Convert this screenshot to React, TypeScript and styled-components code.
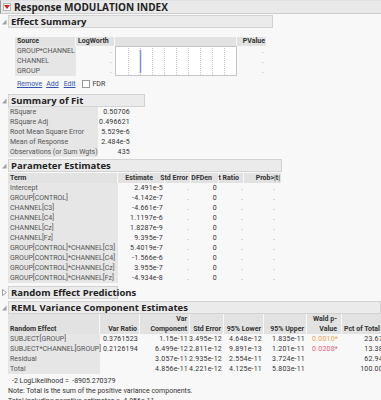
import React from "react";
import styled, { createGlobalStyle } from "styled-components";

const Global = createGlobalStyle`
  html, body { margin: 0; padding: 0; background: #f8f8f8; }
  body { font-family: Roboto, "Noto Sans", sans-serif; color: #333; }
  * { box-sizing: border-box; }
`;

const Page = styled.div`
  width: 381px;
  height: 400px;
  overflow: hidden;
  background: #f8f8f8;
  display: flex;
  flex-direction: column;
  font-size: 7px;
`;

const TopBar = styled.div`
  height: 14px;
  display: flex;
  align-items: center;
  gap: 3px;
  padding-left: 2px;
  background: #e9e9e9;
  border-top: 1px solid #e0e0e0;
  border-bottom: 1px solid #cdcdcd;
  border-left: 1px solid #9a9a9a;
`;

const RedButton = styled.span`
  width: 8px;
  height: 8px;
  display: flex;
  align-items: center;
  justify-content: center;
  background: #f4f4f4;
  border: 1px solid #b8b8b8;
`;

const MainTitle = styled.span`
  font-family: "Open Sans", sans-serif;
  font-size: 10px;
  font-weight: 700;
  color: #222;
  white-space: nowrap;
`;

const Outline = styled.section<{ $mt: number }>`
  margin-top: ${(p) => p.$mt}px;
  display: flex;
  flex-direction: column;
`;

const OutlineHead = styled.div`
  display: flex;
  align-items: center;
  height: 13px;
  padding-left: 2px;
  gap: 1px;
`;

const ToggleBox = styled.span`
  width: 5px;
  height: 13px;
  display: flex;
  align-items: center;
`;

const TitleBox = styled.div<{ $w?: number }>`
  ${(p) => (p.$w ? `width: ${p.$w}px;` : "flex: 1;")}
  height: 13px;
  display: flex;
  align-items: center;
  padding-left: 2px;
  background: #ebebeb;
  border: 1px solid #d2d2d2;
  font-family: "Open Sans", sans-serif;
  font-size: 9.5px;
  font-weight: 700;
  color: #222;
  white-space: nowrap;
`;

const Grid = styled.div<{ $cols: string; $rows: string; $ml: number; $mt?: number }>`
  display: grid;
  grid-template-columns: ${(p) => p.$cols};
  grid-template-rows: ${(p) => p.$rows};
  margin-left: ${(p) => p.$ml}px;
  margin-top: ${(p) => p.$mt ?? 0}px;
  line-height: 10px;
`;

const Head = styled.div<{ $align?: "left" | "right"; $pr?: number }>`
  display: flex;
  flex-direction: column;
  justify-content: flex-end;
  align-items: ${(p) => (p.$align === "left" ? "flex-start" : "flex-end")};
  padding-left: 2px;
  padding-right: ${(p) => p.$pr ?? 2}px;
  background: #e2e2e2;
  border-right: 1px solid #f8f8f8;
  font-weight: 700;
  color: #333;
  white-space: nowrap;
`;

const Label = styled.div`
  display: flex;
  align-items: center;
  padding-left: 2px;
  background: #e6e6e6;
  color: #555;
  white-space: nowrap;
`;

const Val = styled.div<{ $pr?: number; $color?: string }>`
  display: flex;
  align-items: center;
  justify-content: flex-end;
  padding-right: ${(p) => p.$pr ?? 2}px;
  color: ${(p) => p.$color ?? "#333"};
  letter-spacing: 0.2px;
  white-space: nowrap;
`;

const Dot = styled(Val)`
  color: #888;
`;

const Chart = styled.div`
  grid-column: 3;
  grid-row: 2 / 5;
  background: #fff;
  border: 1px solid #c6c6c6;
`;

const LinkRow = styled.div`
  display: flex;
  align-items: center;
  height: 9px;
  margin-top: 3px;
  margin-left: 17px;
`;

const Link = styled.a<{ $mr: number }>`
  color: #2f55b0;
  text-decoration: underline;
  margin-right: ${(p) => p.$mr}px;
  cursor: pointer;
`;

const Check = styled.span`
  width: 8px;
  height: 8px;
  background: #fff;
  border: 1px solid #9a9a9a;
  margin-right: 3px;
`;

const Notes = styled.div`
  margin-top: 2px;
  margin-left: 8px;
  line-height: 10px;
  color: #333;
  white-space: nowrap;
`;

const NoteLine = styled.div<{ $indent?: number }>`
  padding-left: ${(p) => p.$indent ?? 0}px;
`;

const OpenToggle = () => (
  <svg width="5" height="6" viewBox="0 0 5 6">
    <polygon points="4.5,0.5 4.5,5.5 0,5.5" fill="#a0a0a0" />
  </svg>
);

const ClosedToggle = () => (
  <svg width="5" height="7" viewBox="0 0 5 7">
    <polygon points="0.5,0.5 4.5,3.5 0.5,6.5" fill="none" stroke="#a0a0a0" strokeWidth="1" />
  </svg>
);

const Section: React.FC<{ title: string; w?: number; mt: number; open?: boolean; children?: React.ReactNode }> = ({
  title,
  w,
  mt,
  open = true,
  children,
}) => (
  <Outline $mt={mt}>
    <OutlineHead>
      <ToggleBox>{open ? <OpenToggle /> : <ClosedToggle />}</ToggleBox>
      <TitleBox $w={w}>{title}</TitleBox>
    </OutlineHead>
    {children}
  </Outline>
);

const effects = ["GROUP*CHANNEL", "CHANNEL", "GROUP"];

const fit: [string, string][] = [
  ["RSquare", "0.50706"],
  ["RSquare Adj", "0.496621"],
  ["Root Mean Square Error", "5.529e-6"],
  ["Mean of Response", "2.484e-5"],
  ["Observations (or Sum Wgts)", "435"],
];

const params: [string, string][] = [
  ["Intercept", "2.491e-5"],
  ["GROUP[CONTROL]", "-4.142e-7"],
  ["CHANNEL[C3]", "-4.661e-7"],
  ["CHANNEL[C4]", "1.1197e-6"],
  ["CHANNEL[Cz]", "1.8287e-9"],
  ["CHANNEL[Fz]", "9.395e-7"],
  ["GROUP[CONTROL]*CHANNEL[C3]", "5.4019e-7"],
  ["GROUP[CONTROL]*CHANNEL[C4]", "-1.566e-6"],
  ["GROUP[CONTROL]*CHANNEL[Cz]", "3.955e-7"],
  ["GROUP[CONTROL]*CHANNEL[Fz]", "-4.934e-8"],
];

type Reml = {
  name: string;
  ratio: string;
  comp: string;
  se: string;
  lo: string;
  hi: string;
  p: string;
  pColor?: string;
  pct: string;
};

const reml: Reml[] = [
  { name: "SUBJECT[GROUP]", ratio: "0.3761523", comp: "1.15e-11", se: "3.495e-12", lo: "4.648e-12", hi: "1.835e-11", p: "0.0010*", pColor: "#f0a050", pct: "23.676" },
  { name: "SUBJECT*CHANNEL[GROUP]", ratio: "0.2126194", comp: "6.499e-12", se: "2.811e-12", lo: "9.891e-13", hi: "1.201e-11", p: "0.0208*", pColor: "#e8607a", pct: "13.383" },
  { name: "Residual", ratio: "", comp: "3.057e-11", se: "2.935e-12", lo: "2.554e-11", hi: "3.724e-11", p: "", pct: "62.942" },
  { name: "Total", ratio: "", comp: "4.856e-11", se: "4.221e-12", lo: "4.125e-11", hi: "5.803e-11", p: "", pct: "100.000" },
];

const gridLines = [12, 24, 36, 48, 60, 72, 84, 96, 108];

export default function App() {
  return (
    <>
      <Global />
      <Page>
        <TopBar>
          <RedButton>
            <svg width="6" height="4" viewBox="0 0 6 4">
              <polygon points="0,0 6,0 3,4" fill="#d42020" />
            </svg>
          </RedButton>
          <MainTitle>Response MODULATION INDEX</MainTitle>
        </TopBar>

        <Section title="Effect Summary" w={265} mt={1}>
          <Grid $cols="61px 39px 122px 30px" $rows="9px 10px 10px 10px" $ml={15} $mt={9}>
            <Head $align="left">Source</Head>
            <Head $align="left">LogWorth</Head>
            <Head />
            <Head $pr={1}>PValue</Head>
            {effects.map((e, i) => (
              <React.Fragment key={e}>
                <Label style={{ gridRow: i + 2, gridColumn: 1 }}>{e}</Label>
                <Dot style={{ gridRow: i + 2, gridColumn: 2 }} $pr={3}>.</Dot>
                <Dot style={{ gridRow: i + 2, gridColumn: 4 }} $pr={3}>.</Dot>
              </React.Fragment>
            ))}
            <Chart>
              <svg width="120" height="29" viewBox="0 0 120 29">
                {gridLines.map((x) => (
                  <line key={x} x1={x + 0.5} y1="1" x2={x + 0.5} y2="28" stroke="#c8c8c8" strokeDasharray="1 1" />
                ))}
                <line x1="24.5" y1="3" x2="24.5" y2="26" stroke="#7b93e0" strokeWidth="1.5" />
              </svg>
            </Chart>
          </Grid>
          <LinkRow>
            <Link $mr={4}>Remove</Link>
            <Link $mr={5}>Add</Link>
            <Link $mr={6}>Edit</Link>
            <Check />
            <span>FDR</span>
          </LinkRow>
        </Section>

        <Section title="Summary of Fit" w={137} mt={6}>
          <Grid $cols="90px 34px" $rows="repeat(5, 10px)" $ml={8}>
            {fit.map(([k, v]) => (
              <React.Fragment key={k}>
                <Label>{k}</Label>
                <Val>{v}</Val>
              </React.Fragment>
            ))}
          </Grid>
        </Section>

        <Section title="Parameter Estimates" w={274} mt={2}>
          <Grid $cols="110px 47px 26px 28px 25px 38px" $rows="10px repeat(10, 10px)" $ml={8} $mt={1}>
            <Head $align="left">Term</Head>
            <Head $pr={11}>Estimate</Head>
            <Head $pr={2}>Std Error</Head>
            <Head $pr={6}>DFDen</Head>
            <Head $pr={4}>t Ratio</Head>
            <Head $pr={1}>Prob&gt;|t|</Head>
            {params.map(([k, v]) => (
              <React.Fragment key={k}>
                <Label>{k}</Label>
                <Val>{v}</Val>
                <Dot $pr={2}>.</Dot>
                <Val $pr={2}>0</Val>
                <Dot $pr={1}>.</Dot>
                <Dot $pr={7}>.</Dot>
              </React.Fragment>
            ))}
          </Grid>
        </Section>

        <Section title="Random Effect Predictions" w={110} mt={3} open={false} />

        <Section title="REML Variance Component Estimates" mt={2}>
          <Grid $cols="92px 40px 50px 34px 40px 43px 35px 47px" $rows="20px repeat(4, 10px)" $ml={8}>
            <Head $align="left">Random Effect</Head>
            <Head>Var Ratio</Head>
            <Head>
              <span>Var</span>
              <span>Component</span>
            </Head>
            <Head>Std Error</Head>
            <Head>95% Lower</Head>
            <Head>95% Upper</Head>
            <Head $pr={4}>
              <span>Wald p-</span>
              <span>Value</span>
            </Head>
            <Head $align="left">Pct of Total</Head>
            {reml.map((r) => (
              <React.Fragment key={r.name}>
                <Label>{r.name}</Label>
                <Val>{r.ratio}</Val>
                <Val>{r.comp}</Val>
                <Val>{r.se}</Val>
                <Val>{r.lo}</Val>
                <Val>{r.hi}</Val>
                <Val $pr={4} $color={r.pColor}>{r.p}</Val>
                <Val>{r.pct}</Val>
              </React.Fragment>
            ))}
          </Grid>
          <Notes>
            <NoteLine $indent={4}>-2 LogLikelihood =&nbsp; -8905.270379</NoteLine>
            <NoteLine>Note: Total is the sum of the positive variance components.</NoteLine>
            <NoteLine>Total including negative estimates = &nbsp;4.856e-11</NoteLine>
          </Notes>
        </Section>
      </Page>
    </>
  );
}
